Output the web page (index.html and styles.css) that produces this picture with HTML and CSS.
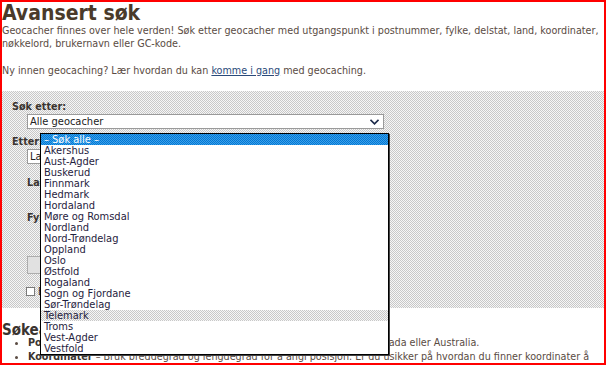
FILE: index.html
```html
<!DOCTYPE html>
<html lang="no">
<head>
<meta charset="utf-8">
<title>Avansert søk</title>
<link rel="stylesheet" href="styles.css">
</head>
<body>
<div class="frame">
  <h1 class="title">Avansert søk</h1>
  <p class="intro">Geocacher finnes over hele verden! Søk etter geocacher med utgangspunkt i postnummer, fylke, delstat, land, koordinater, nøkkelord, brukernavn eller GC-kode.</p>
  <p class="intro">Ny innen geocaching? Lær hvordan du kan <a href="#" class="link">komme i gang</a> med geocaching.</p>

  <div class="form">
    <div class="field">
      <span class="label">Søk etter:</span>
      <div class="select select-wide"><span>Alle geocacher</span>
        <svg class="chev" width="9" height="6" viewBox="0 0 9 6"><path d="M0.5 0.8 L4.5 4.8 L8.5 0.8" fill="none" stroke="#1c2a4a" stroke-width="1.6"/></svg>
      </div>
    </div>
    <div class="field">
      <span class="label">Etter:</span>
      <div class="select select-small"><span>Land</span></div>
    </div>
    <div class="sub"><span class="label">Land:</span></div>
    <div class="sub sub-fylke"><span class="label">Fylke:</span></div>
    <div class="sub"><button class="btn" type="button">Søk</button></div>
    <div class="sub check"><span class="box"></span><span>Ekskluder mine egne</span></div>

    <ul class="dropdown">
      <li class="sel">– Søk alle –</li>
      <li>Akershus</li>
      <li>Aust-Agder</li>
      <li>Buskerud</li>
      <li>Finnmark</li>
      <li>Hedmark</li>
      <li>Hordaland</li>
      <li>Møre og Romsdal</li>
      <li>Nordland</li>
      <li>Nord-Trøndelag</li>
      <li>Oppland</li>
      <li>Oslo</li>
      <li>Østfold</li>
      <li>Rogaland</li>
      <li>Sogn og Fjordane</li>
      <li>Sør-Trøndelag</li>
      <li class="hover">Telemark</li>
      <li>Troms</li>
      <li>Vest-Agder</li>
      <li>Vestfold</li>
    </ul>
  </div>

  <h2 class="subtitle">Søkealternativer</h2>
  <ul class="tips">
    <li><b>Postnummer</b> – Søk etter cacher i nærheten av et postnummer i USA, Canada eller Australia.</li>
    <li><b>Koordinater</b> – Bruk breddegrad og lengdegrad for å angi posisjon. Er du usikker på hvordan du finner koordinater å bruke, se hjelpesidene.</li>
  </ul>
</div>
</body>
</html>
```
FILE: styles.css
```css
html, body {
  margin: 0;
  padding: 0;
  background: #fff;
}
.frame {
  position: relative;
  box-sizing: border-box;
  width: 606px;
  height: 365px;
  border: 2px solid #f00;
  overflow: hidden;
  font-family: "DejaVu Sans Condensed", "DejaVu Sans", sans-serif;
  font-size: 10.7px;
  color: #5a4b43;
}
.title {
  margin: 0;
  font-size: 21px;
  line-height: 22px;
  font-weight: bold;
  color: #4a3a2a;
}
.intro {
  margin: 0 0 14px;
  line-height: 13px;
}
.link {
  color: #2a4a7a;
  text-decoration: underline;
}
.form {
  position: relative;
  height: 217px;
  margin-top: 1px;
  padding: 9px 10px 0;
  box-sizing: border-box;
  background: repeating-conic-gradient(#c8c8c8 0 25%, #f6f6f6 0 50%) 0 0 / 2px 2px;
  color: #333;
}
.label {
  font-weight: bold;
  color: #3a3430;
  line-height: 13px;
  display: block;
}
.field {
  display: flex;
  flex-direction: column;
  gap: 1px;
  margin-bottom: 6px;
}
.select {
  margin-left: 15px;
  box-sizing: border-box;
  height: 15px;
  border: 1px solid #9a9a9a;
  background: #fff;
  display: flex;
  align-items: center;
  justify-content: space-between;
  padding: 0 4px 0 2px;
  color: #222;
  font-size: 11px;
}
.select-wide { width: 357px; }
.select-small { width: 120px; }
.chev { display: block; }
.sub {
  margin-left: 15px;
}
.sub .label { margin-top: 12px; }
.sub-fylke .label { margin-top: 22px; }
.btn {
  display: block;
  margin-top: 32px;
  height: 18px;
  width: 60px;
  border: 1px solid #adadad;
  background: #e1e1e1;
  font: inherit;
  color: #222;
  padding: 0;
}
.check {
  display: flex;
  align-items: center;
  gap: 3px;
  margin-top: 11px;
  margin-left: 14px;
}
.box {
  width: 7px;
  height: 7px;
  border: 1px solid #7a7a7a;
  background: #fff;
}
.dropdown {
  position: absolute;
  left: 38px;
  top: 42px;
  width: 347px;
  margin: 0;
  padding: 0;
  list-style: none;
  background: #fff;
  border: 1px solid #000;
  box-shadow: 1px 1px 0 #444;
  font-size: 11px;
  color: #1f2240;
}
.dropdown li {
  height: 11px;
  line-height: 11px;
  padding-left: 3px;
  white-space: nowrap;
}
.dropdown .sel {
  background: repeating-conic-gradient(#0078d7 0 25%, #3ea0e6 0 50%) 0 0 / 2px 2px;
  color: #fff;
}
.dropdown .hover {
  background: repeating-conic-gradient(#c8c8c8 0 25%, #f6f6f6 0 50%) 0 0 / 2px 2px;
}
.subtitle {
  margin: 16px 0 0;
  font-size: 15px;
  line-height: 12px;
  font-weight: bold;
  color: #3a3430;
}
.tips {
  margin: 0;
  padding-left: 26px;
  line-height: 14px;
}
.tips b { color: #3a3430; }
```
